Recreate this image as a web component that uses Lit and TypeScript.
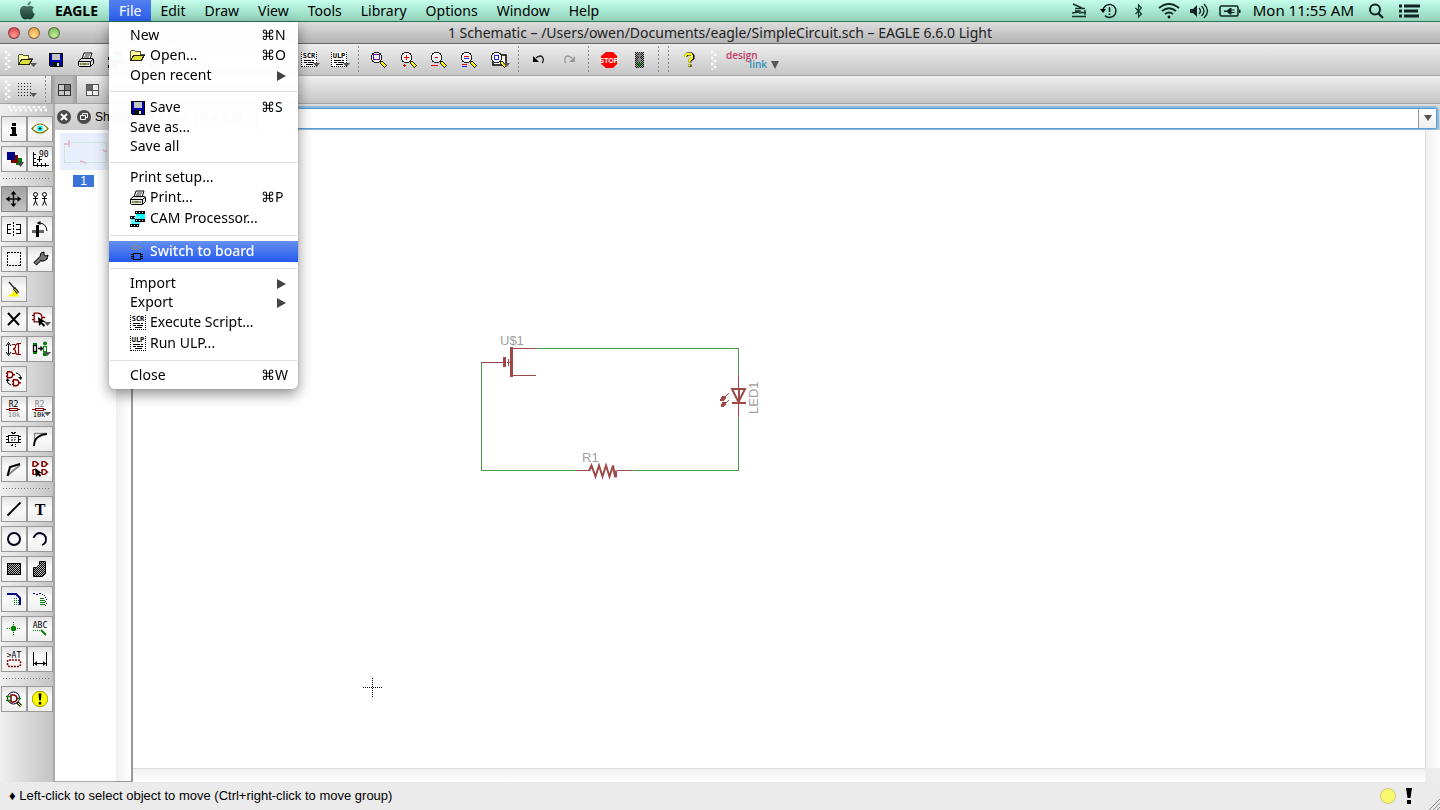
import { LitElement, html, svg, css, nothing } from "lit";
import type { SVGTemplateResult } from "lit";
import { customElement, property, state } from "lit/decorators.js";
import { classMap } from "lit/directives/class-map.js";

// Shapes that several icons share, drawn on a 16 x 16 grid.
const drop = svg`<path d="M12 11h7l-3.500 4z" fill="#555"/>`;
const lens = svg`<g shape-rendering="crispEdges"><path d="M3 0h5v1h2v2h1v5h-1v2h-2v1h-5v-1h-2v-2h-1v-5h1v-2h2z" fill="#f4f4f4"/><path d="M3 .5h5M1 1.500h2M8 1.500h2M1.500 2v1M9.500 2v1M.5 3v5M10.500 3v5M1.500 8v2M9.500 8v2M2 9.500h1M8 9.500h1M3 10.500h5" fill="none" stroke="#222"/><path d="M10 10l5 5" stroke="#222" stroke-width="4"/><path d="M10.500 10.500l4 4" stroke="#ff0" stroke-width="2"/></g>`;
const page = (label: string) => svg`<g shape-rendering="crispEdges"><rect x="0" y="0" width="16" height="15" fill="#fff"/><path d="M.5 0v15M15.500 0v15" stroke="#000" stroke-dasharray="1 1"/><path d="M1 14.500h14" stroke="#000" stroke-dasharray="1 1"/><path d="M3 8.500h7M11 8.500h2M3 10.500h3M7 10.500h6M5 12.500h7" stroke="#000"/></g><text x="8" y="6" font-size="7" font-weight="700" font-family="DejaVu Sans Mono, monospace" text-anchor="middle">${label}</text>`;
const gate = (x: number, y: number, s: number) => svg`<g transform="translate(${x} ${y}) scale(${s})"><path d="M2 1h3q4 0 4 4t-4 4h-3zM0 3h2M0 7h2M9 5h3" fill="none" stroke="#800000" stroke-width="${1.3 / s}"/></g>`;

const icons: Record<string, SVGTemplateResult> = {
  open: svg`<g shape-rendering="crispEdges"><path d="M.5 12.500v-9l1-1h3l1 1h5v3h4l-3 6z" fill="#ffff9c" stroke="#554"/><path d="M1 12l3-5h10.500l-3 5z" fill="#dddd3a" stroke="#221"/></g>`,
  save: svg`<g shape-rendering="crispEdges"><path d="M1 1h14v14h-13l-1-1z" fill="#0000b0"/><rect x="4" y="1" width="8" height="7" fill="#c4c4c4"/><rect x="4" y="10" width="8" height="5" fill="#111"/><rect x="9" y="11" width="2" height="3" fill="#ddd"/><path d="M1.500 1.500h13v13h-12l-1-1z" fill="none" stroke="#000"/></g>`,
  print: svg`<g stroke="#000"><path d="M4 7l2-6h8l-2 6z" fill="#fff"/><path d="M7 3h5M6 5h5" stroke-width=".8"/><path d="M.5 9l3-2.500h11l1 1v4l-3 3h-11l-1-1z" fill="#e4e4e4"/><path d="M.5 9.500h12v4.500M12.500 9.500l3-2.500M2 12h9" fill="none"/></g><path d="M3 12h2M8 12h2" stroke="#dd0"/>`,
  cam: svg`<g shape-rendering="crispEdges"><rect x="6" y="0" width="9" height="9" fill="#0ff"/><rect x="1" y="5" width="9" height="9" fill="#5ff"/><path d="M5 1.500h10M5 9.500h10M0 6.500h5M0 14.500h9" stroke="#000" stroke-width="3"/><path d="M6 1.500h9M6 9.500h9M1 6.500h4M1 14.500h8" stroke="#fff" stroke-dasharray="1 2"/></g>`,
  board: svg`<g shape-rendering="crispEdges" fill="none"><path d="M3 1.500h4l2 2-2 2h-4zM1 2.500h2M1 4.500h2M9 3.500h3" stroke="#888"/><path d="M3.500 9.500h7v6h-7zM1 10.500h2M1 12.500h2M1 14.500h2M11 10.500h2M11 12.500h2M11 14.500h2" stroke="#000"/></g>`,
  scr: page("SCR"),
  ulp: page("ULP"),
  fit: svg`${lens}<g shape-rendering="crispEdges"><path d="M3 2.500h5M3 7.500h5M2.500 3v4M8.500 3v4" stroke="#22f"/><path d="M2 2.500h1M8 2.500h1M2 7.500h1M8 7.500h1M5 2.500h1M5 7.500h1" stroke="red"/></g>`,
  zin: svg`${lens}<path d="M3 5.500h5M5.500 3v5M2 13.500h3M3.500 12v3" stroke="#e00" shape-rendering="crispEdges"/>`,
  zout: svg`${lens}<path d="M4 5.500h3M0 13.500h7" stroke="#e00" shape-rendering="crispEdges"/>`,
  redraw: svg`${lens}<g shape-rendering="crispEdges"><path d="M3 4.500h5M1 12.500h5" stroke="#e00"/><path d="M3 6.500h5M1 14.500h5" stroke="#22f"/></g>`,
  zsel: svg`<path d="M2 7v6h13v-10h-6" fill="#fff" stroke="#000" stroke-width="1.500"/>${lens}<rect x="3.500" y="3.500" width="4" height="4" fill="#fff" stroke="#22f"/>`,
  undo: svg`<path d="M5 6q5-4 7 0 1 3-1 5" fill="none" stroke="#222" stroke-width="1.300"/><path d="M2 4v6h6z" fill="#000"/>`,
  redo: svg`<path d="M11 6q-5-4-7 0-1 3 1 5" fill="none" stroke="#999" stroke-width="1.300"/><path d="M14 4v6h-6z" fill="#999"/>`,
  stop: svg`<path d="M5 0h7l4 4v8l-4 4h-7l-5-4v-8z" fill="#f00"/><text x="8" y="11" font-size="7" font-weight="700" font-family="Liberation Sans, sans-serif" text-anchor="middle" fill="#fff">STOP</text>`,
  traffic: svg`<defs><pattern id="tl" width="2" height="2" patternUnits="userSpaceOnUse"><rect width="2" height="2" fill="#aaa"/><rect width="1" height="1"/><rect x="1" y="1" width="1" height="1"/></pattern></defs><rect x="4" y="0" width="9" height="16" fill="url(#tl)"/><circle cx="8.500" cy="3" r="2" fill="#777"/><circle cx="8.500" cy="8" r="2" fill="#888"/><path d="M6 11h5l-2.500 4z" fill="#080"/>`,
  help: svg`<g transform="translate(0 1)"><path d="M5 4v-1.500l1.500-1.500h4l1.500 1.500v2.500l-3 2.500v2M9 11.500v2.500" fill="none" stroke="#000" stroke-width="3"/><path d="M4.500 4v-1.500l1.500-1.500h4l1 1.500v2.500l-2.500 2.500v2M8.500 11.500v2" fill="none" stroke="#ff0" stroke-width="2"/></g>`,
  grid: svg`<g stroke="#222" stroke-dasharray="1 2" shape-rendering="crispEdges"><path d="M0 1.500h15M0 4.500h15M0 7.500h15M0 10.500h15M0 13.500h15"/></g>`,
  tiles: svg`<g shape-rendering="crispEdges"><rect x="2.500" y="2.500" width="12" height="11" fill="#c8c8c8" stroke="#333"/><rect x="9" y="3" width="5" height="5" fill="#777"/><path d="M8.500 2v12M2 8.500h13" stroke="#333"/></g>`,
  tiles2: svg`<g shape-rendering="crispEdges"><rect x="2.500" y="2.500" width="12" height="11" fill="#f2f2f2" stroke="#555"/><rect x="3" y="3" width="5" height="5" fill="#666"/><path d="M8.500 2v12M2 8.500h13" stroke="#555"/></g>`,

  info: svg`<path d="M6 2h4v3h-4zM5 6h5v7h1v2h-7v-2h2v-5h-1z"/>`,
  show: svg`<path d="M0 7.500q8-9 16 0-8 9-16 0z" fill="#fffff0" stroke="#777700" stroke-width="1.200"/><circle cx="8" cy="7.500" r="3" fill="#0ff"/><circle cx="8" cy="7.500" r="1.300"/>`,
  layers: svg`<path d="M10 7h6v7h-6z" fill="#008000"/><path d="M5 4h7v8h-7z" fill="#800000"/><path d="M1 1h8v8h-8z" fill="#000080"/><path d="M11 11h7l-3.500 5z" fill="#444"/>`,
  mark: svg`<path d="M1.500 1v13.500h15M1 3.500h3M1 7.500h3M1 11.500h3M5.500 12v4M9.500 12v4M13.500 12v4M7.500 5v6M5 8.500h5" fill="none" stroke="#000" shape-rendering="crispEdges"/><text x="7" y="6" font-size="8" font-family="DejaVu Sans Mono, monospace">90</text>`,
  move: svg`<path d="M7.500 1v14M.5 8h14" stroke="#111" stroke-width="1.500"/><path d="M7.500 0l3 3.500h-6zM7.500 16l3-3.500h-6zM0 8l3.500-3v6zM15 8l-3.500-3v6z"/>`,
  copy: svg`<g fill="none" stroke="#000"><circle cx="3.500" cy="3.500" r="2"/><circle cx="12.500" cy="3.500" r="2"/><path d="M3.500 5.500v5M1 7.500h5M3.500 10l-2 4.500M3.500 10l2 4.500M12.500 5.500v5M10 7.500h5M12.500 10l-2 4.500M12.500 10l2 4.500"/></g>`,
  mirror: svg`<g fill="none" stroke="#000" shape-rendering="crispEdges"><path d="M5 3.500h-4v9h4M1 8.500h4M10 3.500h4v9h-4M10 8.500h4"/><path d="M7.500 1v14" stroke-dasharray="2 1"/></g>`,
  rotate: svg`<path d="M0 9h12v3h-12z" fill="#666"/><path d="M4 4h3v12h-3z"/><path d="M7 2q7 0 8 8" fill="none" stroke="#000"/><path d="M4.500 2l4-2v4z"/>`,
  group: svg`<rect x="1.500" y="1.500" width="13" height="13" fill="none" stroke="#000" stroke-dasharray="2 1" shape-rendering="crispEdges"/>`,
  wrench: svg`<path d="M3 13l6-6" stroke="#000" stroke-width="4.500"/><path d="M8 6l1-4 3-1v3l2 1 2-1-1 4-3 2h-3z" fill="#777" stroke="#000"/><path d="M3.500 12.500l6-6" stroke="#777" stroke-width="2.500"/>`,
  paint: svg`<path d="M1 15.500q2-2 5-2.500l1-3h4l2 5.500z" fill="#ff0"/><path d="M3 1l7 8" stroke="#222" stroke-width="1.300"/><path d="M8 7l4 5" stroke="#222" stroke-width="3"/><path d="M8.500 8l3 3.500" stroke="#ff0"/>`,
  del: svg`<path d="M2 2l11 12M2 14l12-12" stroke="#000" stroke-width="2"/>`,
  add: svg`${gate(0, 1, 1.1)}<path d="M6 6l1 9 2-2 3 3 1-2-3-3h4z"/>${drop}`,
  pin: svg`<path d="M2.500 3v10" stroke="#000"/><path d="M0 5l2.500-3.500 2.500 3.500M0 11l2.500 3.500 2.500-3.500" fill="none" stroke="#000"/><path d="M6 3.500h3M6 12.500h3M15 2.500h-3q-3 1-2.500 3 0 2-2.500 2.500 2.500.5 2.500 2.500 0 3 2.500 3h3M12.500 2v12" fill="none" stroke="#800000" stroke-width="1.200"/>`,
  rep: svg`<g fill="none" stroke="#000" stroke-width="1.300"><rect x="1.500" y="4.500" width="3" height="6"/><path d="M6 7.500h4M8.500 5.500l2 2-2 2"/></g><g fill="#008000"><rect x="1" y="2" width="4" height="2"/><rect x="1" y="11" width="4" height="2"/><circle cx="13" cy="2.500" r="2"/><circle cx="13" cy="13" r="2.300"/></g><rect x="11.500" y="5.500" width="3" height="5" fill="none" stroke="#080"/>${drop}`,
  swap: svg`${gate(0, 0, 0.75)}${gate(6, 8, 0.75)}<path d="M10 2q5 1 5 6M5 14q-4-1-4-5" fill="none" stroke="#000"/><path d="M15 9l-3-3h4zM1 7l-1 3h4z"/>`,
  name: svg`<text x="7.500" y="6" font-size="8" font-family="DejaVu Sans Mono, monospace" text-anchor="middle">R2</text><text x="8" y="16" font-size="7" fill="#888" font-family="DejaVu Sans Mono, monospace" text-anchor="middle">10k</text><path d="M0 8.500h14" stroke="#800000"/><rect x="3.500" y="7.500" width="8" height="2" fill="#eee" stroke="#800000"/>`,
  value: svg`<text x="7.500" y="6" font-size="8" fill="#888" font-family="DejaVu Sans Mono, monospace" text-anchor="middle">R2</text><text x="7" y="16" font-size="7" font-family="DejaVu Sans Mono, monospace" text-anchor="middle">10k</text><path d="M0 8.500h14" stroke="#800000"/><rect x="3.500" y="7.500" width="8" height="2" fill="#eee" stroke="#800000"/>${drop}`,
  smash: svg`<g fill="none" stroke="#000" shape-rendering="crispEdges"><rect x="2.500" y="4.500" width="10" height="7"/><path d="M5 6.500h6M5 8.500h6M5 9.500h4" stroke="#777" stroke-dasharray="2 1"/><path d="M5 1.500h2M8 1.500h2M6 2.500h3M5 14.500h2M9 13.500h1M9 15.500h1M6 13.500h1M0 5.500h2M0 8.500h2M0 11.500h2M13 5.500h2M13 8.500h2M13 11.500h2"/></g>`,
  miter: svg`<path d="M2.500 14v-11.500h12" fill="none" stroke="#888" stroke-width="1.300"/><path d="M2 15q0-6 4-9 4-3 9-3" fill="none" stroke="#000" stroke-width="1.800"/>`,
  split: svg`<path d="M2 14l12-10" stroke="#888" stroke-width="2"/><path d="M1.500 15l2.500-9 10-3" fill="none" stroke="#000" stroke-width="2"/>`,
  invoke: svg`${gate(0, 0, 0.6)}${gate(9, 0, 0.6)}${gate(0, 8, 0.6)}${gate(9, 8, 0.6)}<path d="M3 7l1 9 2-2 2 2 1-2-2-2h3z"/>`,
  wire: svg`<path d="M1.500 14.500l13-13" stroke="#000" stroke-width="1.800"/>`,
  text: svg`<text x="8" y="14" font-size="16" font-weight="700" font-family="Liberation Serif, serif" text-anchor="middle">T</text>`,
  circle: svg`<circle cx="8" cy="8" r="6" fill="none" stroke="#000020" stroke-width="2"/>`,
  arc: svg`<path d="M1.500 7q2-5 6.500-5 6 1 6 6.500 0 4-4 5.500" fill="none" stroke="#000020" stroke-width="1.800"/>`,
  rect: svg`<defs><pattern id="rh" width="2" height="2" patternUnits="userSpaceOnUse"><rect width="2" height="2" fill="#bbb"/><rect width="1" height="1"/><rect x="1" y="1" width="1" height="1"/></pattern></defs><rect x="1.500" y="2.500" width="13" height="11" fill="url(#rh)" stroke="#000" shape-rendering="crispEdges"/>`,
  poly: svg`<defs><pattern id="ph" width="2" height="2" patternUnits="userSpaceOnUse"><rect width="2" height="2" fill="#bbb"/><rect width="1" height="1"/><rect x="1" y="1" width="1" height="1"/></pattern></defs><path d="M1.500 15.500v-9h3l3-3v-3h6v12l-3 3z" fill="url(#ph)" stroke="#000"/>`,
  bus: svg`<path d="M1 3h9l4 4v7" fill="none" stroke="#000080" stroke-width="2"/><path d="M8.500 7v8M10.500 7v8M12.500 9v6" stroke="#008000" stroke-dasharray="1 1" shape-rendering="crispEdges"/>`,
  net: svg`<path d="M1 2.500h2M4 3.500h2M7 2.500h2M10 3.500h1M12 4.500h1M13 6.500h1M14 8.500h1M13 10.500h1M14 12.500h1M13 14.500h1" fill="none" stroke="#000080" shape-rendering="crispEdges"/><path d="M8 7.500h4M8 9.500h5M8 11.500h5M8 13.500h5" stroke="#008000" shape-rendering="crispEdges"/>`,
  junction: svg`<path d="M7.500 1v14M1 7.500h14" stroke="#008000" stroke-dasharray="1 1" shape-rendering="crispEdges"/><circle cx="7.500" cy="7.500" r="2.700" fill="#008000"/>`,
  label: svg`<text x="8" y="7" font-size="8" font-family="DejaVu Sans Mono, monospace" text-anchor="middle">ABC</text><path d="M1 9.500h8" stroke="#008000" stroke-dasharray="1 1"/><path d="M9 9l5 5" stroke="#008000" stroke-width="1.800"/>`,
  attr: svg`<text x="8" y="7" font-size="8" font-family="DejaVu Sans Mono, monospace" text-anchor="middle">&gt;AT</text><path d="M3 9h10l1.500 1v4l-1.500 1.500h-10l-1.500-1.500v-4z" fill="none" stroke="#800000" stroke-dasharray="2 1" stroke-width="1.500"/>`,
  dim: svg`<path d="M1.500 1v14M14.500 1v14M2 12.500h12" fill="none" stroke="#000" shape-rendering="crispEdges"/><path d="M2 12.500l3-2.500v5zM14 12.500l-3-2.500v5z"/>`,
  erc: svg`<circle cx="7.500" cy="7" r="6" fill="#fff" stroke="#000040"/><path d="M0 5.500h5M0 9.500h5M10 7.500h5" stroke="#080" stroke-width="1.500"/><path d="M5 4h3q3 1 3 3.500t-3 3.500h-3z" fill="none" stroke="#800000" stroke-width="1.500"/><path d="M11 11l4 4" stroke="#222" stroke-width="3"/><path d="M12 12l3 3" stroke="#ff0"/>`,
  errors: svg`<circle cx="8" cy="8" r="7.700" fill="#ff0" stroke="#a5a500"/><path d="M6.500 2.500h3l-.6 7h-1.800zM6.800 11h2.400v2.500h-2.400z"/>`,

  s1: svg`<path d="M2 1l9 4M4 5.500h10M4 8h5v3M1 10l7-1M1 13.500h14M10 9.500h5M14 7v5" fill="none" stroke="#153328" stroke-width="1.400"/>`,
  s2: svg`<path d="M2 8a6.500 6.500 0 1 1 2 4.600" fill="none" stroke="#122" stroke-width="1.500"/><path d="M-1 6h6l-3 4z"/><path d="M8.500 4v5M8.500 10.500v1.500" stroke="#122" stroke-width="1.600"/>`,
  s3: svg`<path d="M4.500 5l6 6-3 3v-12l3 3-6 6" fill="none" stroke="#163428" stroke-width="1.200"/>`,
  s4: svg`<g fill="none" stroke="#112a20" stroke-width="2"><path d="M-2 5q10-8 20 0M1 8q7-5.500 14 0M4 11q4-3 8 0"/></g><circle cx="8" cy="14" r="1.400"/>`,
  s5: svg`<path d="M-1 6h3l4-4v12l-4-4h-3z" fill="#122"/><path d="M8 5q3 3 0 6M10.500 3q5 5 0 10M13 1q7 7 0 14" fill="none" stroke="#122" stroke-width="1.300"/>`,
  s6: svg`<rect x="-1" y="3" width="18" height="10" rx="1.500" fill="none" stroke="#122" stroke-width="1.500"/><path d="M18 6.500h1.500v3.500h-1.500zM3 7.500h3l3-2.500h1.500v1.500h3v1h-3v1.500h3v1h-3v1.500h-1.500l-3-2.500h-3z" fill="#122"/>`,
  search: svg`<circle cx="7" cy="6.500" r="5" fill="none" stroke="#122" stroke-width="2"/><path d="M10.500 10.500l4.500 4.500" stroke="#122" stroke-width="2.300"/>`,
  list: svg`<path d="M1 3h3M1 8h3M1 13h3" stroke="#122" stroke-width="3"/><path d="M6 3h16M6 8h14M6 13h15" stroke="#122" stroke-width="3"/>`,
};

@customElement("eagle-icon")
export class EagleIcon extends LitElement {
  static styles = css`
    :host { display: block; flex: none; width: 24px; height: 24px; }
    :host([small]) { width: 16px; height: 16px; }
    .art { display: block; width: 100%; height: 100%; overflow: visible; }
  `;
  @property() name = "";
  @property({ type: Boolean, reflect: true }) small = false;
  @property({ type: Boolean }) arrow = false;
  render() {
    return html`<svg class="art" viewBox=${this.small ? "0 0 16 16" : "-4 -4 24 24"} aria-hidden="true">
      ${icons[this.name]}${this.arrow ? drop : nothing}
    </svg>`;
  }
}

interface Entry { label: string; icon?: string; key?: string; sub?: boolean; active?: boolean }
const fileMenu: (Entry | null)[] = [
  { label: "New", key: "⌘N" },
  { label: "Open...", icon: "open", key: "⌘O" },
  { label: "Open recent", sub: true },
  null,
  { label: "Save", icon: "save", key: "⌘S" },
  { label: "Save as..." },
  { label: "Save all" },
  null,
  { label: "Print setup..." },
  { label: "Print...", icon: "print", key: "⌘P" },
  { label: "CAM Processor...", icon: "cam" },
  null,
  { label: "Switch to board", icon: "board", active: true },
  null,
  { label: "Import", sub: true },
  { label: "Export", sub: true },
  { label: "Execute Script...", icon: "scr" },
  { label: "Run ULP...", icon: "ulp" },
  null,
  { label: "Close", key: "⌘W" },
];

@customElement("menu-bar")
export class MenuBar extends LitElement {
  static styles = css`
    :host { display: block; font: 14px/21px "Noto Sans", "Open Sans", sans-serif; color: #000; }
    button { font: inherit; color: inherit; border: 0; background: none; margin: 0; padding: 0; }
    .bar { display: flex; height: 21px; background: linear-gradient(#c6feec, #a9e9d3 50%, #93d2ba); border-bottom: 1px solid #2c7459; }
    .apple { width: 45px; padding-left: 19px; }
    .apple svg { display: block; }
    .top { position: relative; }
    .title { height: 21px; padding: 0 10px 0 9px; }
    .app { width: 64px; font-weight: 700; }
    .open { color: #fff; background: linear-gradient(#5480ee, #2c5ff0); padding: 0 10px; }
    .space { flex: 1; }
    .cell { display: grid; place-items: center; width: 30px; }
    .clock { padding: 0 7px 0 9px; font-size: 15px; }
    .end { margin-right: 19px; }
    .menu { position: absolute; z-index: 5; top: 22px; left: 0; width: 189px; padding: 4px 0; margin: 0; box-sizing: border-box; list-style: none; background: rgba(255, 255, 255, 0.97); backdrop-filter: blur(1px); border-radius: 0 0 6px 6px; box-shadow: 0 5px 14px rgba(0, 0, 0, 0.45), 0 0 1px rgba(0, 0, 0, 0.5); }
    .item { display: flex; align-items: center; gap: 4px; width: 100%; height: 19px; padding: 0 12px 0 21px; line-height: 17px; text-align: left; }
    .pic { height: 21px; }
    .name { flex: 1; padding-bottom: 2px; white-space: nowrap; }
    .key { width: 25px; padding-bottom: 2px; white-space: nowrap; }
    .arrow { width: 0; height: 0; border: solid transparent; border-width: 5px 0 5px 9px; border-left-color: #444; }
    .active { color: #fff; font-weight: 500; background: linear-gradient(#658ff0, #2459ee); }
    .rule { height: 1px; margin: 0 1px; padding: 0; background: #dedede; border: solid transparent; border-width: 6px 0 5px; background-clip: padding-box; }
  `;
  @state() private opened = true;
  private item(e: Entry | null) {
    if (!e) return html`<li class="rule" role="separator"></li>`;
    return html`<li role="none"><button role="menuitem" class=${classMap({ item: true, pic: !!e.icon, active: !!e.active })}>
      ${e.icon ? html`<eagle-icon small name=${e.icon}></eagle-icon>` : nothing}
      <span class="name">${e.label}</span>
      ${e.key ? html`<span class="key">${e.key}</span>` : nothing}
      ${e.sub ? html`<span class="arrow"></span>` : nothing}
    </button></li>`;
  }
  render() {
    return html`<nav class="bar">
      <button class="apple" aria-label="Apple menu"><svg width="17" height="20" viewBox="0 0 17 20"><defs><linearGradient id="ag" x2="0" y2="1"><stop stop-color="#5c8678"/><stop offset="1" stop-color="#173d31"/></linearGradient></defs><path d="M8.500 5.500q3-1.800 6.500.8-3.500 3 .8 6.700-1.600 5-4.600 5.500-2.700-1-5 0-3.500-.2-5.200-6.500-.6-7 4.500-7.200zM8.500 4.500q0-3.500 3.500-4.300 0 3.600-3.500 4.300" fill="url(#ag)"/></svg></button>
      <button class="title app">EAGLE</button>
      <div class="top">
        <button class="title open" aria-expanded=${this.opened} @click=${() => (this.opened = !this.opened)}>File</button>
        ${this.opened ? html`<ul class="menu" role="menu">${fileMenu.map((e) => this.item(e))}</ul>` : nothing}
      </div>
      ${["Edit", "Draw", "View", "Tools", "Library", "Options", "Window", "Help"].map((t) => html`<button class="title">${t}</button>`)}
      <span class="space"></span>
      ${["s1", "s2", "s3", "s4", "s5", "s6"].map((n) => html`<button class="cell" aria-label="Status item"><eagle-icon small name=${n}></eagle-icon></button>`)}
      <span class="clock">Mon 11:55 AM</span>
      <button class="cell" aria-label="Search"><eagle-icon small name="search"></eagle-icon></button>
      <button class="cell end" aria-label="Notifications"><eagle-icon small name="list"></eagle-icon></button>
    </nav>`;
  }
}

const rail: (string[] | null)[] = [
  ["info", "show"], ["layers", "mark"], null,
  ["move", "copy"], ["mirror", "rotate"], ["group", "wrench"], ["paint"], ["del", "add"], ["pin", "rep"], ["swap"],
  ["name", "value"], ["smash", "miter"], ["split", "invoke"], null,
  ["wire", "text"], ["circle", "arc"], ["rect", "poly"], ["bus", "net"], ["junction", "label"], ["attr", "dim"], null,
  ["erc", "errors"],
];

@customElement("tool-rail")
export class ToolRail extends LitElement {
  static styles = css`
    :host { display: flex; flex-direction: column; gap: 4px; flex: none; width: 52px; padding-left: 1px; background: linear-gradient(90deg, #efefef, #c4c4c4); border-right: 2px solid #aaa; }
    .grip { height: 6px; margin: 2px 6px 0; background: radial-gradient(circle at 2px 1px, #fafafa 1px, transparent 2px) 0 0 / 5px 6px, radial-gradient(circle at 4px 4px, #fafafa 1px, transparent 2px) 0 0 / 5px 6px; }
    .row { display: flex; }
    .tool { width: 26px; height: 26px; padding: 0; border: 1px solid #999; background: linear-gradient(#e2e2e2, #fbfbfb 45%, #efefef); }
    .down { background: linear-gradient(#a2a2a2, #c2c2c2); border-color: #888; }
    .dots { height: 6px; margin: 0 2px; background: linear-gradient(90deg, #777 1px, transparent 1px) 0 2px / 3px 1px repeat-x; }
  `;
  render() {
    return html`<div class="grip"></div>${rail.map((r) => r
      ? html`<div class="row">${r.map((n) => html`<button class=${classMap({ tool: true, down: n === "move" })} aria-label=${n}><eagle-icon name=${n}></eagle-icon></button>`)}</div>`
      : html`<div class="dots"></div>`)}`;
  }
}

@customElement("schematic-sheet")
export class SchematicSheet extends LitElement {
  static styles = css`
    :host { display: block; min-width: 0; overflow: hidden; background: #fff; }
    .draw { display: block; width: 100%; height: 100%; }
    .net { stroke: #4a9d4a; }
    .part { stroke: #a04848; }
    .fill { fill: #a04848; }
    .tag { fill: #a0a0a0; font: 13px "Liberation Sans", sans-serif; }
    .cross { stroke: #000; stroke-dasharray: 1 1; }
  `;
  render() {
    return html`<svg class="draw" shape-rendering="crispEdges" fill="none">
      <g transform="translate(-133 -130)">
        <path class="net" d="M535 348.500h203.500v27M738.500 416v54.500h-108M577 470.500h-95.500v-108"/>
        <path class="part" d="M481 362.500h23M507 362.500h4M512 348.500h24M512 375.500h24M738.500 375v14M738.500 403v14M576 470.500h13M617 470.500h14M508.500 359v7"/>
        <path class="fill" d="M510 347h3v30h-3zM503 357h3v10h-3z"/>
        <g class="part" shape-rendering="auto" stroke-width="2">
          <path d="M589 471l2.500-5.500 4 11 3.500-11 3.500 11 3.500-11 3.500 11 3.500-11 2 11h1v-6"/>
          <path d="M732 389h13l-6.500 13zM732 403h14M739 389v14"/>
        </g>
        <path class="fill" d="M720 400l2-4h4v2l-3 3h-3zM721 406l1-4h4v2l-3 3h-2z"/>
        <path class="part" d="M724 398l5-5M725 404l4-4" stroke-width="1"/>
        <text class="tag" x="500" y="345">U$1</text>
        <text class="tag" x="582" y="462">R1</text>
        <text class="tag" transform="translate(758 414) rotate(-90)">LED1</text>
        <path class="cross" d="M363 687.500h19M372.500 678v19"/>
      </g>
    </svg>`;
  }
}

@customElement("app-root")
export class AppRoot extends LitElement {
  static styles = css`
    :host { display: flex; flex-direction: column; height: 100vh; overflow: hidden; background: #ececec; color: #000; font: 13px/16px "Liberation Sans", Arial, sans-serif; }
    button, input, select { font: inherit; margin: 0; }
    .titlebar { display: grid; grid-template-columns: 1fr auto 1fr; align-items: center; height: 21px; background: linear-gradient(#dedede, #b3b3b3); border-bottom: 1px solid #696969; }
    .lights { display: flex; gap: 8px; padding-left: 8px; }
    .light { width: 12px; height: 12px; padding: 0; border: 1px solid rgba(60, 40, 40, 0.6); border-radius: 50%; }
    .red { background: radial-gradient(circle at 50% 75%, #ff9c98, #d8343c); }
    .amber { background: radial-gradient(circle at 50% 75%, #ffe08c, #e0953a); }
    .green { background: radial-gradient(circle at 50% 75%, #c8f0a0, #6aae4c); }
    .doc { margin: 0; font: 14px/20px "Noto Sans", "Open Sans", sans-serif; color: #222; white-space: nowrap; }
    .tools { display: flex; align-items: center; height: 31px; padding-left: 5px; background: linear-gradient(#eee, #c6c6c6); border-bottom: 1px solid #a5a5a5; }
    .second { height: 27px; }
    .grip { flex: none; width: 6px; height: 20px; background: radial-gradient(circle at 1px 2px, #fafafa 1px, transparent 2px) 0 0 / 6px 6px, radial-gradient(circle at 4px 5px, #fafafa 1px, transparent 2px) 0 0 / 6px 6px; }
    .tool { display: grid; place-items: center; flex: none; width: 30px; height: 27px; padding: 0; border: 0; background: none; }
    .sep { flex: none; width: 10px; height: 27px; background: linear-gradient(#888 2px, transparent 2px) 4px 0 / 1px 4px repeat-y; }
    .on { width: 26px; background: linear-gradient(90deg, #999, #b9b9b9 20%, #b9b9b9 80%, #999); }
    .gap { width: 7px; flex: none; }
    .sheetpick { width: 93px; height: 20px; margin: 0 5px; opacity: 0.6; }
    .logo { display: flex; align-items: flex-end; margin-left: 9px; padding: 0; border: 0; background: none; font: 600 10px/9px "Open Sans", sans-serif; color: #c23a66; }
    .brand { display: flex; flex-direction: column; width: 41px; }
    .design { text-align: left; }
    .link { text-align: right; color: #2e8fbd; }
    .logo .tri { margin-left: 4px; }
    .tri { display: block; width: 0; height: 0; border: solid transparent; border-width: 8px 4px 0; border-top-color: #555; }
    .work { display: flex; flex: 1; min-height: 0; }
    .main { display: grid; flex: 1; min-width: 0; grid-template: 26px 1fr 14px / 61px 17px 1fr 15px; }
    .head { grid-column: 1 / -1; display: flex; align-items: center; background: linear-gradient(#ddd, #ccc); }
    .round { display: grid; place-items: center; flex: none; width: 14px; height: 14px; margin-left: 6px; padding: 0; border: 0; border-radius: 50%; background: #4a4a4a; }
    .head .x { margin-left: 2px; }
    .label { width: 37px; margin-left: 4px; font-size: 12px; }
    .coords { width: 126px; text-align: center; color: #444; font-size: 12px; }
    .command { display: flex; flex: 1; height: 19px; margin: 2px 4px 0 0; background: #fff; border-radius: 2px; box-shadow: 0 0 0 1px #5b9bd0, 0 0 0 3px #8ab8de; }
    .field { flex: 1; min-width: 0; padding: 0 4px; border: 0; outline: 0; background: none; }
    .pick { display: grid; place-items: center; width: 18px; padding: 0; border: 0; border-left: 1px solid #999; background: linear-gradient(#fff, #eee); }
    .pick .tri { border-width: 6px 4px 0; }
    .sheets { grid-row: 2 / 4; display: flex; flex-direction: column; align-items: center; background: #fff; border-bottom: 1px solid #aaa; padding: 3px 4px 0 0; }
    .thumb { display: block; width: 48px; height: 37px; background: #e6effb; }
    .num { width: 21px; margin-top: 5px; padding: 0; border: 0; color: #fff; background: #3a74d8; font-size: 12px; line-height: 12px; }
    .trough { grid-row: 2 / 4; background: linear-gradient(90deg, #f0f0f0, #fff); border: solid #999; border-width: 0 2px 1px 0; }
    schematic-sheet, .vbar, .hbar { position: static; }
    .vbar { background: linear-gradient(90deg, #f0f0f0, #fff); border-left: 1px solid #ddd; }
    .hbar { grid-column: 3; grid-row: 3; background: linear-gradient(#f0f0f0, #fff); border-top: 1px solid #ddd; }
    .status { display: flex; align-items: center; height: 28px; padding: 0 16px 0 9px; background: #ebebeb; }
    .msg { flex: 1; }
    .lamp { width: 14px; height: 14px; border: 1px solid #d5cc70; border-radius: 50%; background: #f7f770; }
    .bang { margin: 0 16px 0 10px; }
    .size { align-self: flex-end; margin-right: -16px; }
  `;
  private tool(name: string, arrow = false) {
    return html`<button class="tool" aria-label=${name}><eagle-icon name=${name} ?arrow=${arrow}></eagle-icon></button>`;
  }
  render() {
    const sep = html`<span class="sep"></span>`;
    return html`
      <menu-bar></menu-bar>
      <header class="titlebar">
        <div class="lights"><button class="light red" aria-label="Close"></button><button class="light amber" aria-label="Minimize"></button><button class="light green" aria-label="Zoom"></button></div>
        <h1 class="doc">1 Schematic – /Users/owen/Documents/eagle/SimpleCircuit.sch – EAGLE 6.6.0 Light</h1>
      </header>
      <div class="tools" role="toolbar">
        <span class="grip"></span>
        ${this.tool("open", true)}${this.tool("save")}${this.tool("print")}${this.tool("cam")}${sep}${this.tool("board")}${sep}
        <select class="sheetpick" aria-label="Sheet"><option>1/1</option></select>${sep}
        ${this.tool("scr", true)}${this.tool("ulp", true)}${sep}
        ${this.tool("fit")}${this.tool("zin")}${this.tool("zout")}${this.tool("redraw")}${this.tool("zsel", true)}${sep}
        ${this.tool("undo")}${this.tool("redo")}${sep}
        ${this.tool("stop")}${this.tool("traffic")}${sep}${sep}
        ${this.tool("help")}<span class="gap"></span><span class="grip"></span>
        <button class="logo"><span class="brand"><span class="design">design</span><span class="link">link</span></span><span class="tri"></span></button>
      </div>
      <div class="tools second" role="toolbar">
        <span class="grip"></span>
        ${this.tool("grid", true)}${sep}
        <button class="tool on" aria-label="tiles"><eagle-icon name="tiles"></eagle-icon></button>${this.tool("tiles2")}
      </div>
      <div class="work">
        <tool-rail></tool-rail>
        <main class="main">
          <div class="head">
            <button class="round x" aria-label="Close panel"><svg width="8" height="8"><path d="M1 1l6 6M7 1l-6 6" stroke="#fff" stroke-width="2"/></svg></button>
            <button class="round" aria-label="Float panel"><svg width="8" height="8" fill="none" stroke="#fff"><path d="M.5 2.500h5v4h-5zM2.500 2v-1.500h5v4h-2"/></svg></button>
            <span class="label">Sheets</span>
            <span class="coords">0.1 inch (-0.4 3.8)</span>
            <div class="command"><input class="field" aria-label="Command"><button class="pick" aria-label="History"><span class="tri"></span></button></div>
          </div>
          <div class="sheets">
            <svg class="thumb" viewBox="0 0 48 37" fill="none"><path d="M4.500 10v19.500h42v-20h-36" stroke="#cfe5dc"/><path d="M4 11h6M9 7v7M20 28l6 2M43 17l4 2" stroke="#dfb6c2" stroke-width="1.500"/></svg>
            <button class="num">1</button>
          </div>
          <div class="trough"></div>
          <schematic-sheet></schematic-sheet>
          <div class="vbar"></div>
          <div class="hbar"></div>
        </main>
      </div>
      <footer class="status">
        <span class="msg">♦ Left-click to select object to move (Ctrl+right-click to move group)</span>
        <span class="lamp"></span>
        <svg class="bang" width="6" height="16"><path d="M0 0h6l-1.500 10h-3zM1 12h4v4h-4z"/></svg>
        <svg class="size" width="12" height="12"><path d="M1 12l11-11M5 12l7-7M9 12l3-3" stroke="#888"/></svg>
      </footer>`;
  }
}
